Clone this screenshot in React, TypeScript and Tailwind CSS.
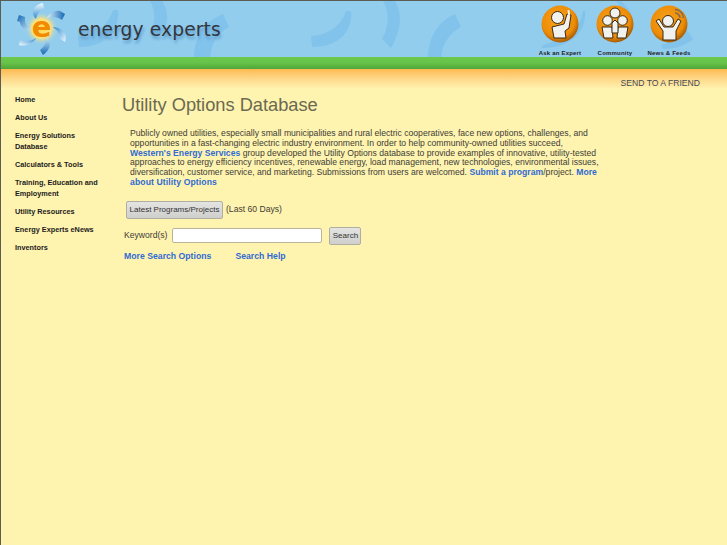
const font = "font-['Liberation_Sans',Arial,sans-serif]";

const menu = [
  ["Home"],
  ["About Us"],
  ["Energy Solutions", "Database"],
  ["Calculators & Tools"],
  ["Training, Education and", "Employment"],
  ["Utility Resources"],
  ["Energy Experts eNews"],
  ["Inventors"],
];

function HeaderArcs() {
  return (
    <svg className="absolute left-0 top-0" width="727" height="57" viewBox="0 0 727 57" fill="#82c3ec">
      <path d="M77 36 C92 35 107 26 112 9 L117 9 C119 30 104 46 78 46 Z" />
      <path d="M149 0 L161 0 C169 12 168 27 156 37 L148 32 C155 24 155 10 149 0 Z" />
      <path d="M193 57 C193 36 204 20 222 13 L228 26 C216 32 210 44 209 57 Z" />
      <path d="M310 35 C326 34 340 26 345 10 L350 10 C352 30 338 46 311 46 Z" />
      <path d="M382 0 L394 0 C402 14 400 30 390 47 L381 38 C388 26 389 12 382 0 Z" />
      <path d="M427 57 C427 36 438 20 454 13 L460 26 C448 32 441 44 440 57 Z" />
      <path d="M540 46 C545 40 578 40 582 10 L584 10 C586 30 570 47 542 47 Z" />
      <path d="M615 0 L620 0 C632 10 634 22 630 30 L624 28 C626 18 622 8 615 0 Z" />
      <path d="M660 44 C672 40 680 34 684 26 L692 38 C686 44 674 48 662 48 Z" />
    </svg>
  );
}

function SunLogo() {
  return (
    <svg width="50" height="54" viewBox="17 3 50 54" className="shrink-0">
      <defs>
        <radialGradient id="sun">
          <stop offset="0" stopColor="#ffd84a" />
          <stop offset="0.55" stopColor="#fde27c" />
          <stop offset="1" stopColor="#92cdee" stopOpacity="0" />
        </radialGradient>
        <linearGradient id="white-top" x1="0" y1="0" x2="0" y2="1">
          <stop offset="0" stopColor="#f2fafe" />
          <stop offset="1" stopColor="#2f8bd2" />
        </linearGradient>
        <linearGradient id="dark-right" x1="0" y1="0" x2="1" y2="0">
          <stop offset="0" stopColor="#d8eefa" />
          <stop offset="1" stopColor="#1368b4" />
        </linearGradient>
        <linearGradient id="white-right" x1="0" y1="0" x2="1" y2="1">
          <stop offset="0" stopColor="#2f8bd2" />
          <stop offset="1" stopColor="#eef8fd" />
        </linearGradient>
        <linearGradient id="dark-bottom" x1="0" y1="0" x2="0" y2="1">
          <stop offset="0" stopColor="#c4e4f7" />
          <stop offset="1" stopColor="#1368b4" />
        </linearGradient>
        <linearGradient id="white-left" x1="1" y1="0" x2="0" y2="1">
          <stop offset="0" stopColor="#2f8bd2" />
          <stop offset="1" stopColor="#f2fafe" />
        </linearGradient>
        <linearGradient id="dark-left" x1="1" y1="1" x2="0" y2="0">
          <stop offset="0" stopColor="#c4e4f7" />
          <stop offset="1" stopColor="#1368b4" />
        </linearGradient>
      </defs>
      <circle cx="41.5" cy="28.5" r="17" fill="url(#sun)" />
      <path d="M43 3 C37 4 33 8 33 13 C33 15 34 17 36 19 C37 15 39 11 44 8 Z" fill="url(#white-top)" />
      <path d="M47 18 C49 13 55 10 60 11 L65 14 L62 20 C58 17 52 16 47 18 Z" fill="url(#dark-right)" />
      <path d="M53 27 C59 27 65 31 66 37 L65 42 L60 39 C60 34 58 31 53 27 Z" fill="url(#white-right)" />
      <path d="M47 38 C52 43 50 50 43 55 L40 50 C44 47 46 43 47 38 Z" fill="url(#dark-bottom)" />
      <path d="M36 38 C33 44 25 47 19 45 L20 40 C26 42 32 41 36 38 Z" fill="url(#white-left)" />
      <path d="M31 30 C24 30 20 26 20 22 L17 21 L19 15 L25 17 L25 20 C25 24 28 27 31 30 Z" fill="url(#dark-left)" />
      <text x="41.5" y="37" textAnchor="middle" fontFamily="'DejaVu Sans',sans-serif" fontWeight="700" fontSize="29" fill="#f18a00">e</text>
    </svg>
  );
}

function Badge({ kind }: { kind: "ask" | "community" | "news" }) {
  return (
    <svg width="38" height="38" viewBox="0 0 38 38">
      <defs>
        <radialGradient id={"orb" + kind} cx="0.45" cy="0.4" r="0.6">
          <stop offset="0" stopColor="#f9a21b" />
          <stop offset="0.75" stopColor="#ed8c06" />
          <stop offset="1" stopColor="#a85c05" />
        </radialGradient>
      </defs>
      <circle cx="19" cy="19" r="18.5" fill={"url(#orb" + kind + ")"} />
      <g fill="#f1f1ee" stroke="#3b2a14" strokeWidth="1">
        {kind === "ask" && (
          <>
            <path d="M11 22 L23 19 L26 9 L30 10 L28 23 L24 26 L25 33 L13 33 Z" />
            <circle cx="16.5" cy="12.5" r="6" />
            <path d="M27.5 5 L28 10" stroke="#f1f1ee" strokeWidth="2" />
          </>
        )}
        {kind === "community" && (
          <>
            <path d="M6 22 H16 L17 33 L8 33 Z" />
            <path d="M22 22 H32 L30 33 H21 Z" />
            <path d="M16 18 L19 15 L22 18 V28 H16 Z" />
            <circle cx="11.5" cy="15.5" r="4.8" />
            <circle cx="26.5" cy="15.5" r="4.8" />
            <circle cx="19" cy="8" r="5" />
          </>
        )}
        {kind === "news" && (
          <>
            <path d="M6 16 L9 14 L14 22 H23 L28 14 L31 16 L26 26 V35 H13 V26 Z" />
            <circle cx="18" cy="16" r="5.5" />
            <g fill="none" stroke="#7a6a58" strokeWidth="1.4">
              <path d="M25 8 A5 5 0 0 1 30 13" />
              <path d="M25 4.5 A8.5 8.5 0 0 1 33.5 13" />
            </g>
          </>
        )}
      </g>
    </svg>
  );
}

function TopLink({ kind, label, w }: { kind: "ask" | "community" | "news"; label: string; w: string }) {
  return (
    <div className={`flex flex-col items-center ${w}`}>
      <Badge kind={kind} />
      <span className="mt-[6px] text-[6px] leading-[8px] font-bold tracking-[0.2px] text-[#222] whitespace-nowrap">{label}</span>
    </div>
  );
}

export default function App() {
  return (
    <div className={`${font} min-h-[545px] w-[727px] overflow-hidden border-l border-t border-[#5c5c52] bg-[#fff3b0]`}>
      <header className="relative flex h-[56px] items-start justify-between overflow-hidden bg-[#92cdee]">
        <HeaderArcs />
        <div className="relative ml-[16px] mt-[2px] flex items-center">
          <SunLogo />
          <span className="ml-[11px] -mt-[1px] font-['DejaVu_Sans',sans-serif] text-[18.7px] leading-[20px] tracking-[0.1px] text-[#33373d] [text-shadow:1px_3px_3px_#5d9bc9]">
            energy experts
          </span>
        </div>
        <div className="relative mr-[31px] mt-[4px] flex">
          <TopLink kind="ask" label="Ask an Expert" w="w-[56px]" />
          <TopLink kind="community" label="Community" w="w-[54px]" />
          <TopLink kind="news" label="News & Feeds" w="w-[54px]" />
        </div>
      </header>

      <div className="h-[12px] bg-gradient-to-b from-[#6cc94c] via-[#66c348] to-[#4fa53a]" />

      <div className="flex h-[20px] items-end justify-end bg-gradient-to-b from-[#fdb94f] via-[#fed98a] to-[#fff3b0] pr-[27px]">
        <span className="mb-[-1px] text-[8.6px] leading-[14px] text-[#3e4a55]">SEND TO A FRIEND</span>
      </div>

      <div className="flex">
        <nav className="ml-[14px] mt-[5px] w-[107px] shrink-0">
          {menu.map((lines) => (
            <div key={lines[0]} className="mb-[7px] text-[7.3px] leading-[11px] font-bold text-[#1c1c1c]">
              {lines.map((l) => (
                <div key={l}>{l}</div>
              ))}
            </div>
          ))}
        </nav>

        <main className="w-[500px] text-[#3d3d35]">
          <h1 className="mt-[4px] text-[18.25px] leading-[24px] font-normal text-[#6a6a50]">Utility Options Database</h1>
          <p className="ml-[8px] mt-[12px] whitespace-nowrap text-[8.65px] leading-[9.75px]">
            Publicly owned utilities, especially small municipalities and rural electric cooperatives, face new options, challenges, and
            <br />
            opportunities in a fast-changing electric industry environment. In order to help community-owned utilities succeed,
            <br />
            <a className="font-bold text-[#2f6bd2]">Western's Energy Services</a> group developed the Utility Options database to provide examples of innovative, utility-tested
            <br />
            approaches to energy efficiency incentives, renewable energy, load management, new technologies, environmental issues,
            <br />
            diversification, customer service, and marketing. Submissions from users are welcomed.{" "}
            <a className="font-bold text-[#2f6bd2]">Submit a program</a>/project. <a className="font-bold text-[#2f6bd2]">More</a>
            <br />
            <a className="font-bold tracking-[0.1px] text-[#2f6bd2]">about Utility Options</a>
          </p>

          <div className="ml-[4px] mt-[13px] flex items-center text-[8.6px]">
            <button className="h-[18px] w-[97px] whitespace-nowrap rounded-[2px] border border-[#b0aea0] bg-gradient-to-b from-[#e4e4e2] to-[#cfcfcd] text-[8px] text-[#333]">Latest Programs/Projects</button>
            <span className="ml-[3px]">(Last 60 Days)</span>
          </div>

          <div className="ml-[2px] mt-[8px] flex items-center text-[8.6px]">
            <span>Keyword(s)</span>
            <input className="ml-[5px] h-[15px] w-[150px] rounded-[2px] border border-[#b8b59a] bg-white" />
            <button className="ml-[7px] h-[18px] w-[32px] rounded-[2px] border border-[#b0aea0] bg-gradient-to-b from-[#e4e4e2] to-[#cfcfcd] text-[8px] text-[#333]">Search</button>
          </div>

          <div className="ml-[2px] mt-[5px] flex text-[8.7px] font-bold leading-[12px] text-[#2f6bd2]">
            <a>More Search Options</a>
            <a className="ml-[24px]">Search Help</a>
          </div>
        </main>
      </div>
    </div>
  );
}
